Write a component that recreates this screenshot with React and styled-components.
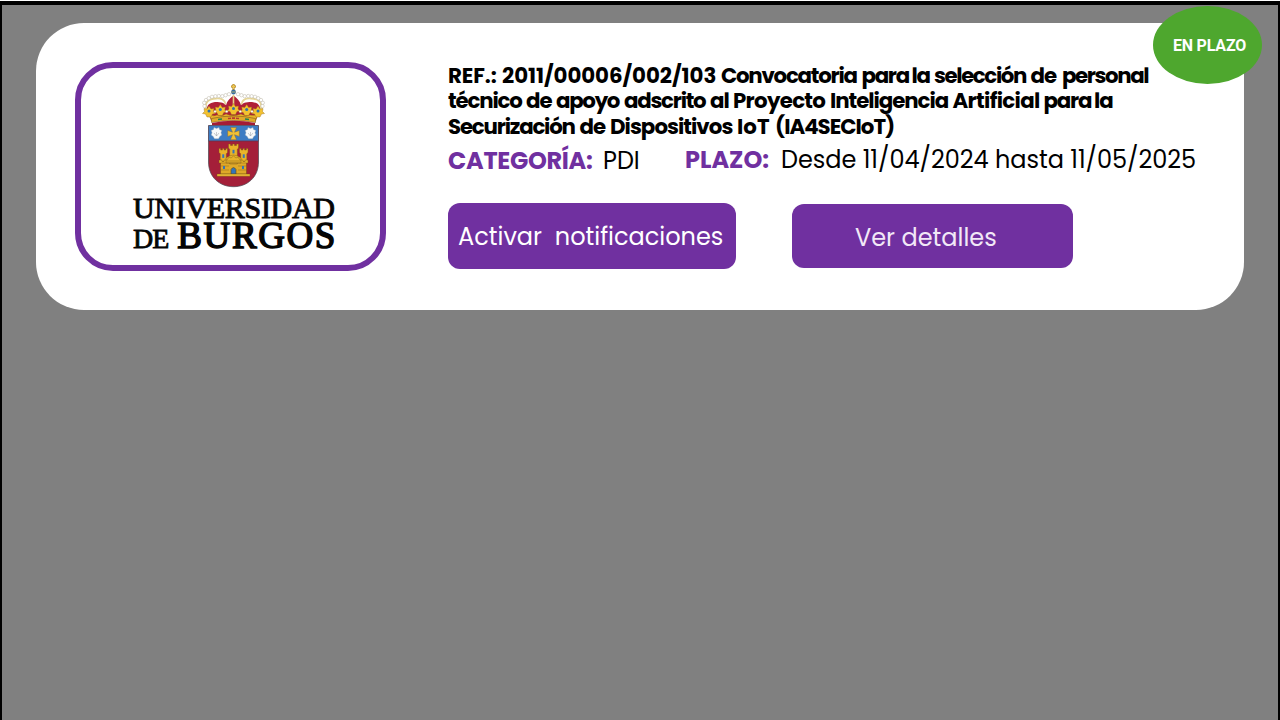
import React from "react";
import styled, { createGlobalStyle } from "styled-components";

const GlobalStyle = createGlobalStyle`
  * { box-sizing: border-box; }
  body { margin: 0; background: #fff; font-family: Poppins, Inter, sans-serif; }
`;

const Page = styled.div`
  height: 720px;
  padding-top: 1px;
  overflow: hidden;
`;

const Frame = styled.main`
  height: 719px;
  padding: 18px 34px 0;
  border: solid #000;
  border-width: 4px 2px 0;
  background: #808080;
`;

const Card = styled.article`
  position: relative;
  display: flex;
  gap: 62px;
  height: 287px;
  padding: 39px 0 0 39px;
  border-radius: 48px;
  background: #fff;
`;

const Badge = styled.span`
  position: absolute;
  top: -17px;
  right: -18px;
  width: 109px;
  height: 78px;
  padding-left: 4px;
  border-radius: 50%;
  background: #4ea72e;
  color: #fff;
  font: 700 16px/80px Roboto, sans-serif;
  letter-spacing: -0.2px;
  text-align: center;
  white-space: nowrap;
`;

const LogoBox = styled.div`
  display: flex;
  flex-direction: column;
  flex: none;
  width: 311px;
  height: 209px;
  padding: 10px 0 0 52px;
  border: 6px solid #7030a0;
  border-radius: 38px;
`;

const Crest = styled.svg`
  display: block;
  flex: none;
  width: 80px;
  height: 112px;
  margin-left: 62px;
`;

const Wordmark = styled.div`
  display: flex;
  align-items: baseline;
  height: ${(p) => p.$height}px;
  color: #050505;
  font-family: "Liberation Serif", serif;
  line-height: ${(p) => p.$height}px;
  margin-top: ${(p) => p.$top || 0}px;
  white-space: nowrap;
`;

const Letters = styled.span`
  font-size: ${(p) => p.$size}px;
  letter-spacing: ${(p) => p.$spacing}px;
  margin-left: ${(p) => p.$left || 0}px;
  -webkit-text-stroke: ${(p) => p.$stroke}px #050505;
`;

const Details = styled.section`
  display: flex;
  flex-direction: column;
  width: 760px;
`;

const Title = styled.h1`
  height: 77.5px;
  margin: 0;
  padding-top: 1px;
  color: #000;
  font-size: 21.33px;
  font-weight: 700;
  line-height: 25.5px;
`;

const Line = styled.span`
  display: flex;
  height: ${(p) => p.$height}px;
  white-space: nowrap;
`;

const Word = styled.span`
  flex: none;
  width: ${(p) => p.$width}px;
  letter-spacing: ${(p) => p.$spacing}px;
`;

const Facts = styled.div`
  display: flex;
  height: 38px;
  padding-top: 1px;
  font-size: 24px;
  line-height: 38px;
  white-space: nowrap;
`;

const Fact = styled.div`
  display: flex;
  width: ${(p) => p.$width}px;
  margin-top: ${(p) => p.$shift || 0}px;
`;

const Label = styled.span`
  width: ${(p) => p.$width}px;
  color: #7030a0;
  font-weight: 700;
  letter-spacing: ${(p) => p.$spacing}px;
`;

const Value = styled.span`
  color: #000;
  letter-spacing: ${(p) => p.$spacing}px;
`;

const Actions = styled.div`
  display: flex;
  align-items: center;
  gap: 56px;
  margin-top: 25.5px;
`;

const Button = styled.button`
  width: ${(p) => p.$width}px;
  height: ${(p) => p.$height}px;
  padding: ${(p) => p.$padding};
  border: 0;
  border-radius: 12px;
  background: #7030a0;
  color: ${(p) => p.$color};
  font: 400 24px/30px Poppins, Inter, sans-serif;
  text-align: left;
  white-space: pre;
`;

/* Each word: text, advance to the next word, tracking. */
const TITLE = [
  { height: 25, words: [["REF.:", 54, -0.1], ["2011/00006/002/103", 219, -0.05], ["Convocatoria", 140.5, -1.25], ["para", 50, -1.3], ["la", 22.5, -1.2], ["selección", 96.5, -1.4], ["de", 31.5, -1], ["personal", 90, -1.4]] },
  { height: 26, words: [["técnico", 78, -1.15], ["de", 30, -1], ["apoyo", 68, -1.3], ["adscrito", 86, -1.25], ["al", 23, -1], ["Proyecto", 97, -0.7], ["Inteligencia", 122.5, -1.05], ["Artificial", 91, -0.65], ["para", 50.5, -1.2], ["la", 22, -1]] },
  { height: 25.5, words: [["Securización", 131.5, -1.2], ["de", 30.5, -1], ["Dispositivos", 127, -0.95], ["IoT", 38, 0], ["(IA4SECIoT)", 120, -1]] },
];

const PEARLS = [[9.5, 28], [9.2, 24.8], [11, 22], [13.8, 20.2], [17, 18.8], [20.4, 18.2], [23.8, 18], [27.3, 18.2], [30.6, 17.2], [34, 16.2]];
const LEAVES = [[14, 33], [25.3, 31.5], [38.5, 30.5], [51.7, 31.5], [63, 33]];
const ROSES = [21.5, 55.5];

function Tower({ x, y, w, h }) {
  const s = w / 5;
  return (
    <g>
      <path
        d={`M${x} ${y}h${s}v1.5h${s}v-1.5h${s}v1.5h${s}v-1.5h${s}v4l-1.2 1.2V${y + h}H${x + 1.2}V${y + 5.2}L${x} ${y + 4}z`}
        fill="#e9b42a" stroke="#7d5816" strokeWidth=".45"
      />
      <rect x={x + w / 2 - 1} y={y + 5.8} width="2" height="3.6" fill="#3474b9" />
    </g>
  );
}

function UniversityCrest() {
  return (
    <Crest viewBox="0 0 80 112" role="img" aria-label="Escudo">
      <path d="M12.500 34C11 30 12 25 20 24c7 0 9 1 11 3 1-4 4-7 7.500-9.500 3.500 2.500 6.500 5.500 7.500 9.500 2-2 4-3 11-3 8 1 9 6 7.500 10L61 42H16z" fill="#b01f38" />
      <path d="M11.500 31C9 24 14 21 21 20.500c5-.5 9 1 9.500 6M65.500 31c2.500-7-2.500-10-9.500-10.500-5-.5-9 1-9.500 6" fill="none" stroke="#e6d597" strokeWidth="1.800" />
      <path d="M38.500 17v12" fill="none" stroke="#e8cf83" strokeWidth="1.600" />
      {PEARLS.map(([x, y]) => (
        <g key={x + "-" + y} fill="#fff" stroke="#aaa28e" strokeWidth=".4">
          <circle cx={x} cy={y} r="1.700" />
          <circle cx={77 - x} cy={y} r="1.700" />
        </g>
      ))}
      <path d="M38.500 6v6M36 8.500h5" stroke="#a87c16" strokeWidth="2" />
      <path d="M38.500 6.500v5M36.500 8.500h4" stroke="#f0c64d" strokeWidth="1.200" />
      <circle cx="38.500" cy="14" r="2.200" fill="#3476b7" stroke="#31485e" strokeWidth=".4" />
      <path d="M36.600 14h3.800" stroke="#e7bb35" strokeWidth=".7" />
      <path d="M14 36q5 3 8 1 5 2 9-1 7 3 15 0 5 3 9 1 4 1 8-1l-2.500 7Q38.500 38 16.500 43z" fill="#e9b42a" stroke="#8a6015" strokeWidth=".4" />
      {LEAVES.map(([x, y]) => (
        <g key={x}>
          <path d={`M${x} ${y - 5}l2 3 3-.5-.5 3 2 2-3 .5-1.500 3h-4l-1.500-3-3-.5 2-2-.5-3 3 .5z`} fill="#f3c230" stroke="#96681a" strokeWidth=".4" />
          <circle cx={x} cy={y} r="1.500" fill="#2f72ae" />
        </g>
      ))}
      {[20, 31.700, 45.300, 57].map((x) => (
        <circle key={x} cx={x} cy="33.500" r="1.300" fill="#fff" stroke="#a98c4b" strokeWidth=".4" />
      ))}
      <path d="M16.500 40.500Q38.500 35.500 60.500 40.500v4q-22-4-44 0z" fill="#e0aa2a" stroke="#6a4518" strokeWidth=".5" />
      <path d="M33 40.500q5.500-.8 11 0" fill="none" stroke="#b5382f" strokeWidth="1.600" strokeDasharray="3 1" />
      <path d="M23 41.500l4-.5M50 41l4 .5" stroke="#248052" strokeWidth="1.600" />
      <path d="M17 45q21.500-4.500 43 0v2H17z" fill="#a51c34" />
      <path d="M13.500 47.500h50V84c0 15-11 24.700-25 24.700S13.500 99 13.500 84z" fill="#a41f39" />
      <path d="M13.500 47.500h50V63h-50z" fill="#3d7cc3" />
      <path d="M13.500 63h50" stroke="#62324d" strokeWidth=".8" />
      <path d="M13.500 47.500h50V84c0 15-11 24.700-25 24.700S13.500 99 13.500 84z" fill="none" stroke="#4b4650" strokeWidth=".7" />
      <path d="M35.500 49.500h6l-2 4.700 4.800-1.700v5.900l-4.800-1.700 2 5h-6l2-5-4.800 1.700v-5.900l4.800 1.700z" fill="#f0c136" stroke="#856025" strokeWidth=".4" />
      {ROSES.map((x) => (
        <g key={x}>
          <path d={`M${x - 2.500} 49.500l2.500 1 2.500-1 .5 2 2.300 1-.8 2.200.8 2.300-2 1.400-1.300 2.300H${x - 2}l-1.300-2.300-2-1.400.8-2.300-.8-2.200 2.300-1z`} fill="#f8fafb" stroke="#9aa6b2" strokeWidth=".4" />
          <path d={`M${x} 58v-4M${x} 58l-2.500-3M${x} 58l2.500-3`} stroke="#9b9fa4" strokeWidth=".5" />
        </g>
      ))}
      <path d="M25.500 80h26v16h-26z" fill="#dfa928" stroke="#6d4b13" strokeWidth=".5" />
      <Tower x={24} y={70.500} w={8.500} h={13} />
      <Tower x={44.500} y={70.500} w={8.500} h={13} />
      <Tower x={33.500} y={66} w={10} h={20} />
      <path d="M24 82h3v1.500h2V82h3l2-3 2 1 2.500-2 2.500 2 2-1 2 3h3v1.500h2V82h3v3H24zM31 80q7.500-6 15 0v5H31z" fill="#e7b229" stroke="#76521a" strokeWidth=".4" />
      <path d="M26 88h8M43 88h8M26 92h8M43 92h8M31 83h15" stroke="#a87a20" strokeWidth=".7" />
      <path d="M36 96v-4.500q2.500-4 5 0V96z" fill="#3474b9" stroke="#65490e" strokeWidth=".6" />
      <path d="M28 91v-3h2v3zM47 91v-3h2v3z" fill="#3474b9" />
      <path d="M22 96h33v2.300H22z" fill="#ecbb33" stroke="#725015" strokeWidth=".4" />
    </Crest>
  );
}

export default function App() {
  return (
    <Page>
      <GlobalStyle />
      <Frame>
        <Card>
          <LogoBox>
            <UniversityCrest />
            <Wordmark $height={30} $top={3}>
              <Letters $size={30} $spacing={-0.3} $stroke={0.9}>UNIVERSIDAD</Letters>
            </Wordmark>
            <Wordmark $height={32} $top={-3}>
              <Letters $size={28} $spacing={-1} $stroke={0.8}>DE</Letters>
              <Letters $size={37} $spacing={1.6} $stroke={1.5} $left={9}>BURGOS</Letters>
            </Wordmark>
          </LogoBox>
          <Details>
            <Title>
              {TITLE.map((line, i) => (
                <Line key={i} $height={line.height}>
                  {line.words.map(([text, width, spacing], j) => (
                    <Word key={j} $width={width} $spacing={spacing}>{text + " "}</Word>
                  ))}
                </Line>
              ))}
            </Title>
            <Facts>
              <Fact $width={237} $shift={1}>
                <Label $width={155} $spacing={-0.3}>CATEGORÍA:</Label>
                <Value $spacing={0}>PDI</Value>
              </Fact>
              <Fact>
                <Label $width={96} $spacing={0}>PLAZO:</Label>
                <Value $spacing={-0.03}>Desde 11/04/2024 hasta 11/05/2025</Value>
              </Fact>
            </Facts>
            <Actions>
              <Button $width={288} $height={66} $padding="2px 0 0 10px" $color="#fff">{"Activar  notificaciones"}</Button>
              <Button $width={281} $height={64} $padding="4px 0 0 63px" $color="#f2e8f7">Ver detalles</Button>
            </Actions>
          </Details>
          <Badge>EN PLAZO</Badge>
        </Card>
      </Frame>
    </Page>
  );
}
